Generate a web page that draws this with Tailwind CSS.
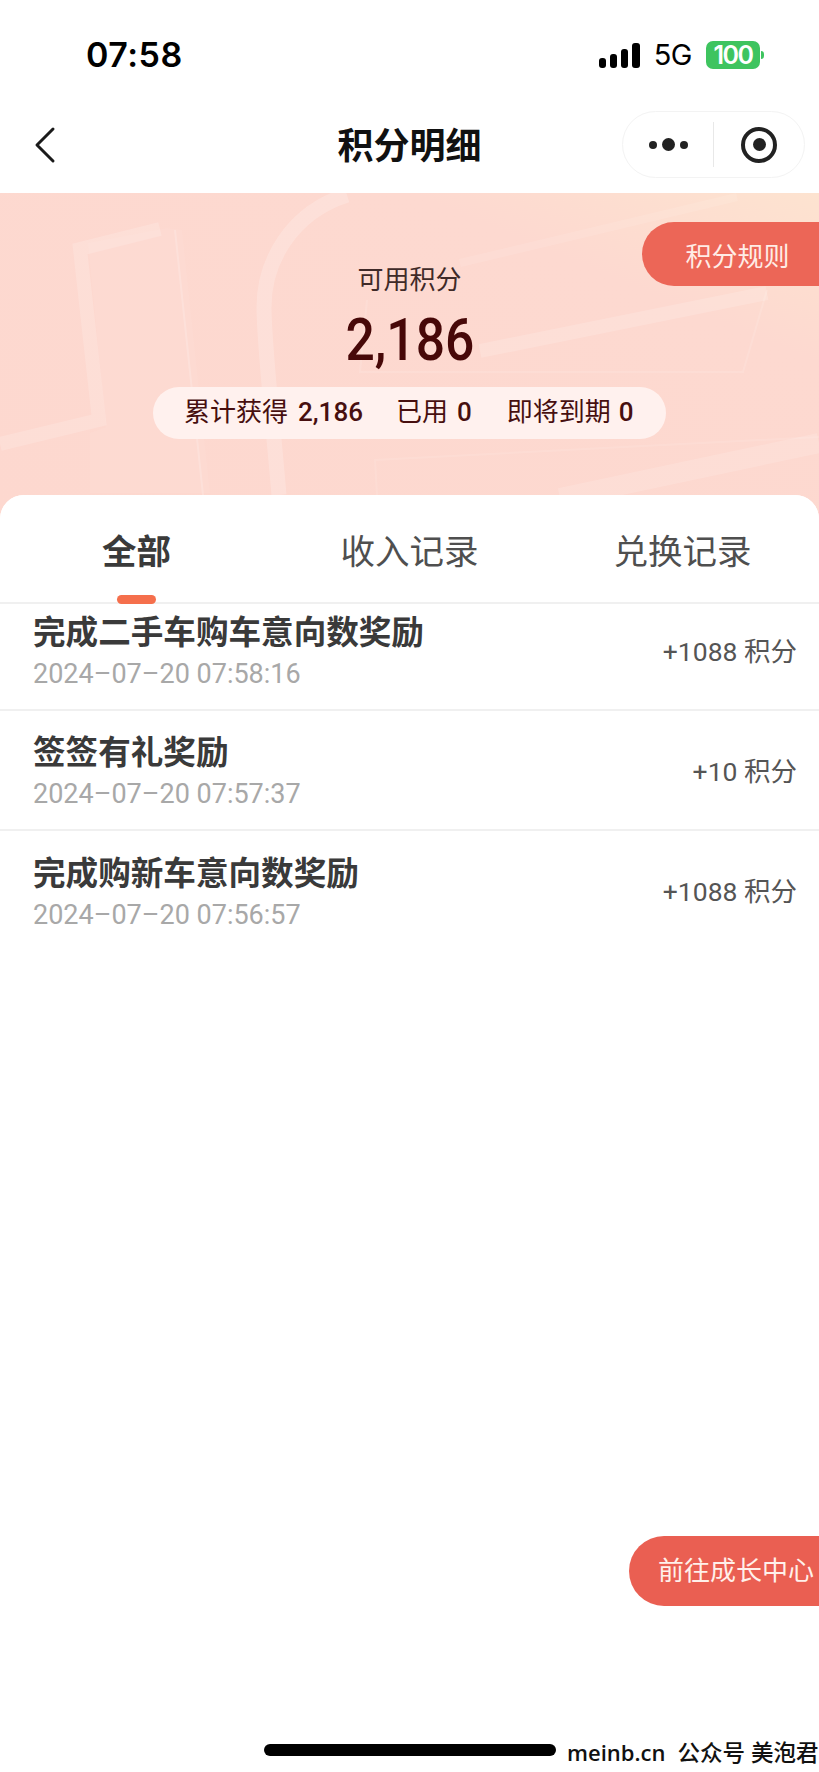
<!DOCTYPE html>
<html lang="zh-CN">
<head>
    <meta charset="UTF-8">
    <meta name="viewport" content="width=device-width, initial-scale=1.0">
    <title>积分明细</title>
    <script src="https://cdn.jsdelivr.net/npm/@tailwindcss/browser@4"></script>
</head>
<body class="bg-white font-['Roboto','Noto_Sans_CJK_SC',sans-serif]">
<div class="relative w-[819px] h-[1772px] overflow-hidden bg-white">

    <!-- status bar -->
    <div class="h-[111px] pl-[86px] pr-[55px] pt-[35px] flex justify-between items-start text-black">
        <span class="font-['Inter'] text-[34px] leading-[40px] font-semibold tracking-[0.5px]">07:58</span>
        <div class="flex items-center h-[40px]">
            <svg class="w-[41px] h-[25px]" viewBox="0 0 41 25" fill="#000">
                <rect x="0" y="15" width="7" height="10" rx="3"/>
                <rect x="11" y="11" width="7" height="14" rx="3"/>
                <rect x="22" y="6" width="7" height="19" rx="3"/>
                <rect x="33" y="0" width="8" height="25" rx="3"/>
            </svg>
            <span class="ml-[14px] font-['Inter'] text-[29px] leading-[32px] font-normal tracking-[-0.5px]">5G</span>
            <div class="ml-[14px] w-[54px] h-[28px] rounded-[7px] bg-[#3ec45f] text-white text-[25px] leading-[28px] font-semibold text-center font-['Inter'] tracking-[-1.5px]">100</div>
            <div class="ml-[1px] w-[3px] h-[8px] rounded-r-full bg-[#3ec45f]"></div>
        </div>
    </div>

    <!-- nav bar -->
    <div class="relative h-[82px] flex items-start justify-center">
        <svg class="absolute left-[32px] top-[15px] w-[26px] h-[38px]" viewBox="0 0 26 38" fill="none" stroke="#1a1a1a" stroke-width="3" stroke-linecap="round" stroke-linejoin="round">
            <path d="M21 3 L5 19 L21 35"/>
        </svg>
        <h1 class="text-[36px] leading-[44px] mt-[14px] font-semibold text-[#111]">积分明细</h1>
        <div class="absolute right-[14px] top-0 w-[183px] h-[67px] rounded-full border border-[#f3f3f3] bg-white flex items-center">
            <div class="w-[90px] flex items-center justify-center gap-[5px]">
                <span class="w-[8px] h-[8px] rounded-full bg-[#222]"></span>
                <span class="w-[13px] h-[13px] rounded-full bg-[#222]"></span>
                <span class="w-[8px] h-[8px] rounded-full bg-[#222]"></span>
            </div>
            <div class="w-px h-[45px] bg-[#e8e8e8]"></div>
            <div class="flex-1 flex justify-center">
                <div class="w-[36px] h-[36px] rounded-full border-[4px] border-[#222] flex items-center justify-center">
                    <span class="w-[13px] h-[13px] rounded-full bg-[#222]"></span>
                </div>
            </div>
        </div>
    </div>

    <!-- points header -->
    <div class="relative h-[340px] bg-linear-to-tr from-[#fdd8cf] via-[#fdd9d0] via-75% to-[#fde3d0] overflow-hidden">
        <svg class="absolute inset-0 w-[819px] h-[340px]" viewBox="0 0 819 340" fill="none">
            <path d="M167 35 L182 37 L210 300 L90 300 L90 240 L106 234 L88 50 Z" fill="#ffffff" fill-opacity="0.05"/>
            <path d="M160 36 L80 56 L99 227 L0 251" stroke="#ffffff" stroke-opacity="0.16" stroke-width="14"/>
            <path d="M175 37 L203 302" stroke="#ffffff" stroke-opacity="0.18" stroke-width="2"/>
            <path d="M347 2 C290 20 264 70 264 114 C264 150 272 220 279 302" stroke="#ffffff" stroke-opacity="0.2" stroke-width="15"/>
            <path d="M737 4 L460 70" stroke="#ffffff" stroke-opacity="0.1" stroke-width="8"/>
            <path d="M767 97 L743 179 L360 179 L367 107" stroke="#ffffff" stroke-opacity="0.12" stroke-width="2"/>
            <path d="M767 100 L480 158" stroke="#ffffff" stroke-opacity="0.16" stroke-width="14"/>
            <path d="M819 250 L560 305" stroke="#ffffff" stroke-opacity="0.14" stroke-width="20"/>
            <path d="M819 244 L375 267 L377 302" stroke="#ffffff" stroke-opacity="0.1" stroke-width="2"/>
        </svg>

        <button class="absolute right-0 top-[29px] w-[177px] h-[64px] rounded-l-full bg-[#ec6657] text-[#ffece6] text-[26px] leading-[64px] pl-[14px] pt-[3px] text-center">积分规则</button>

        <div class="relative flex flex-col items-center pt-[70px]">
            <p class="text-[26px] leading-[34px] text-[#3f2a28]">可用积分</p>
            <p class="mt-[9px] text-[60px] leading-[68px] font-medium text-[#470808] scale-x-[0.86]">2,186</p>
            <div class="mt-[13px] w-[513px] h-[52px] rounded-full bg-[#fff1ee] flex items-center pl-[31px] pb-[2px] text-[26px] text-[#470f0f]">
                <span>累计获得</span>
                <span class="ml-[10px] font-medium">2,186</span>
                <span class="ml-[33px]">已用</span>
                <span class="ml-[9px] font-medium">0</span>
                <span class="ml-[35px]">即将到期</span>
                <span class="ml-[8px] font-medium">0</span>
            </div>
        </div>
    </div>

    <!-- records card -->
    <div class="absolute left-0 right-0 top-[495px] bottom-0 bg-white rounded-t-[24px] overflow-hidden">
        <div class="relative z-10 h-[109px] grid grid-cols-3 bg-white border-b-2 border-[#f0f0f0]">
            <div class="relative text-center text-[34.5px] leading-[44px] pt-[35px] font-semibold text-[#3a3a3a]">
                全部
                <span class="absolute left-[117px] top-[100px] w-[39px] h-[9px] rounded-full bg-[#f56f4c]"></span>
            </div>
            <div class="text-center text-[34.5px] leading-[44px] pt-[35px] text-[#4f4f4f]">收入记录</div>
            <div class="text-center text-[34.5px] leading-[44px] pt-[35px] text-[#4f4f4f]">兑换记录</div>
        </div>

        <!-- list is scrolled a little under the tabs -->
        <div class="-mt-[13px]">
            <div class="h-[120px] pl-[33px] pr-[22px] pt-[3px] border-b-2 border-[#f0f0f0] flex items-center justify-between">
                <div>
                    <p class="text-[32.6px] leading-[44px] font-semibold text-[#3a3a3a]">完成二手车购车意向数奖励</p>
                    <p class="text-[27px] leading-[36px] mt-[1px] text-[#a8a8a8]">2024–07–20 07:58:16</p>
                </div>
                <p class="text-[26.5px] leading-[36px] text-[#555]">+1088 积分</p>
            </div>
            <div class="h-[120px] pl-[33px] pr-[22px] pt-[3px] border-b-2 border-[#f0f0f0] flex items-center justify-between">
                <div>
                    <p class="text-[32.6px] leading-[44px] font-semibold text-[#3a3a3a]">签签有礼奖励</p>
                    <p class="text-[27px] leading-[36px] mt-[1px] text-[#a8a8a8]">2024–07–20 07:57:37</p>
                </div>
                <p class="text-[26.5px] leading-[36px] text-[#555]">+10 积分</p>
            </div>
            <div class="h-[120px] pl-[33px] pr-[22px] pt-[2px] flex items-center justify-between">
                <div>
                    <p class="text-[32.6px] leading-[44px] font-semibold text-[#3a3a3a]">完成购新车意向数奖励</p>
                    <p class="text-[27px] leading-[36px] mt-[1px] text-[#a8a8a8]">2024–07–20 07:56:57</p>
                </div>
                <p class="text-[26.5px] leading-[36px] text-[#555]">+1088 积分</p>
            </div>
        </div>
    </div>

    <!-- floating button -->
    <button class="absolute right-0 top-[1536px] w-[190px] h-[70px] rounded-l-full bg-[#ea5f52] text-[#fff0ea] text-[26px] leading-[70px] pl-[29px] text-left whitespace-nowrap">前往成长中心</button>

    <!-- home bar and watermark -->
    <div class="absolute left-[264px] top-[1744px] w-[292px] h-[12px] rounded-full bg-black"></div>
    <p class="absolute left-[567px] top-[1734px] font-['Open_Sans','Noto_Sans_CJK_SC',sans-serif] text-[22px] leading-[36px] font-semibold text-[#111] whitespace-nowrap">meinb.cn<span class="ml-[12px] text-[22.5px] font-medium">公众号</span><span class="ml-[6px] text-[22.5px] font-medium">美泡君</span></p>
</div>
</body>
</html>
